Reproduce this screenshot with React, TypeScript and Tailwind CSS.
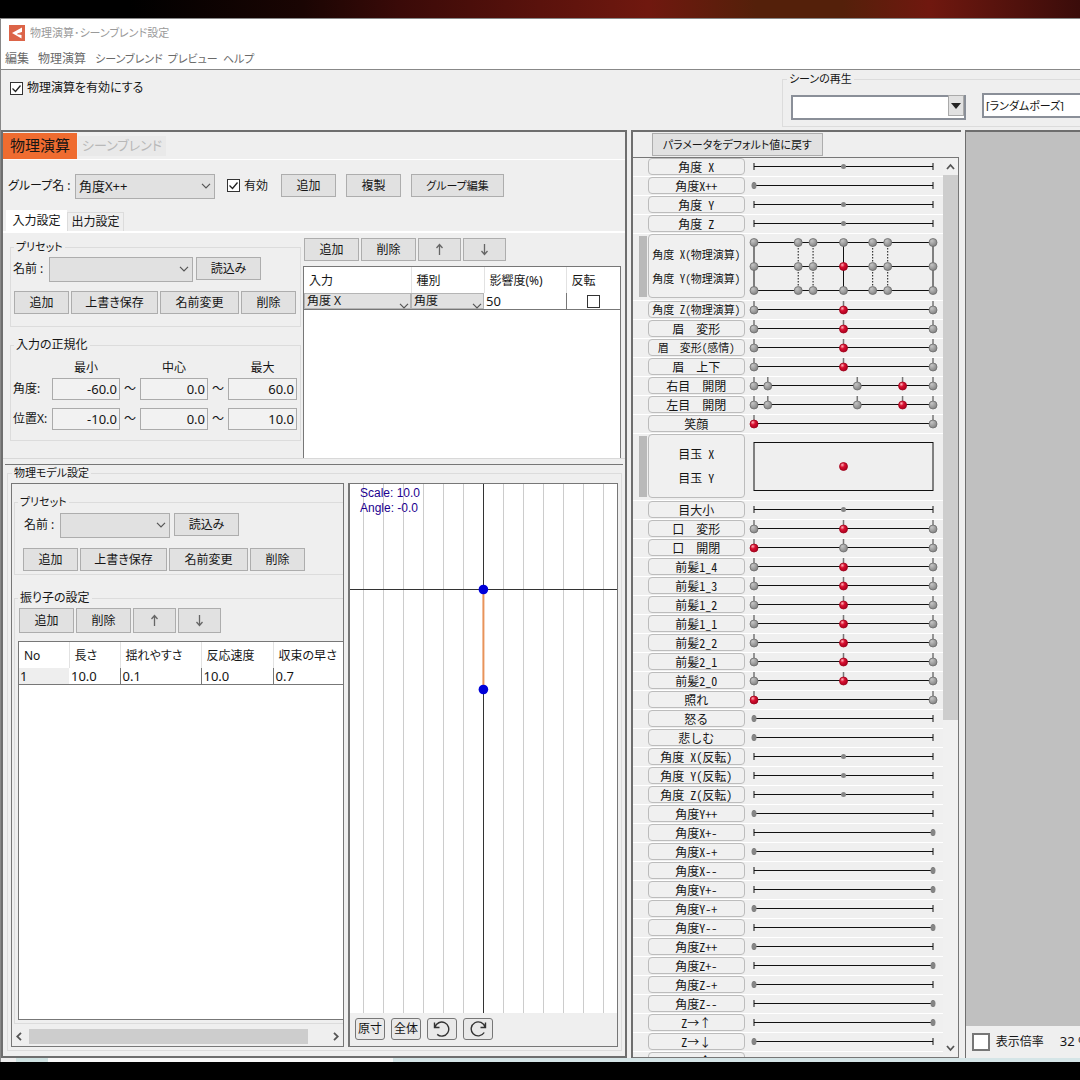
import React from 'react';

const KEY_FONT = "font-['Noto_Sans_CJK_JP',sans-serif]";

function Button({ w, h = 'h-[23px]', size = 'text-xs', children }: { w: string; h?: string; size?: string; children: React.ReactNode }) {
  return (
    <button
      type="button"
      className={`${w} ${h} ${size} flex shrink-0 items-center justify-center border border-[#adadad] bg-[#e1e1e1] leading-none whitespace-nowrap`}
    >
      {children}
    </button>
  );
}

function ArrowIcon({ down = false }: { down?: boolean }) {
  return (
    <svg width="9" height="13" viewBox="0 0 9 13" fill="none" stroke="#666" strokeWidth="1.3" aria-label={down ? '下へ' : '上へ'}>
      {down ? <path d="M4.5 1v10.5M1.5 8l3 3.5 3-3.5" /> : <path d="M4.5 12V1.5M1.5 5l3-3.5 3 3.5" />}
    </svg>
  );
}

function Chevron({ className = '' }: { className?: string }) {
  return (
    <svg width="10" height="6" viewBox="0 0 10 6" fill="none" stroke="#555" strokeWidth="1.2" className={`pointer-events-none absolute ${className}`}>
      <path d="M1 .8l4 4 4-4" />
    </svg>
  );
}

function Combo({ w, label, value = '' }: { w: string; label: string; value?: string }) {
  return (
    <span className={`relative block h-[25px] shrink-0 ${w}`}>
      <select aria-label={label} className="h-full w-full appearance-none border border-[#adadad] bg-[#e1e1e1] pl-[3px] text-[13px] leading-none">
        <option>{value}</option>
      </select>
      <Chevron className="top-[10px] right-1" />
    </span>
  );
}

function CellCombo({ label, value }: { label: string; value: string }) {
  return (
    <span className="relative block h-4">
      <select aria-label={label} className="block h-full w-full appearance-none border border-[#b5b5b5] bg-[#e1e1e1] pl-0.5 text-xs leading-none">
        <option>{value}</option>
      </select>
      <Chevron className="right-0.5 bottom-0" />
    </span>
  );
}

function CheckBox({ id, label }: { id: string; label: string }) {
  return (
    <span className="flex items-center gap-1">
      <span className="relative block h-[13px] w-[13px]">
        <input id={id} type="checkbox" defaultChecked className="peer block h-full w-full appearance-none border border-[#333] bg-white" />
        <svg viewBox="0 0 13 13" fill="none" stroke="#222" strokeWidth="1.3" className="pointer-events-none absolute inset-0 hidden peer-checked:block">
          <path d="M2.5 6.5l3 3 5-6" />
        </svg>
      </span>
      <label htmlFor={id} className="text-xs leading-4">{label}</label>
    </span>
  );
}

function Group({ title, size = 'text-xs', className = '', children }: { title: string; size?: string; className?: string; children: React.ReactNode }) {
  return (
    <fieldset className={`min-w-0 border border-[#dcdcdc] ${className}`}>
      <legend className={`ml-[3px] px-0.5 leading-4 ${size}`}>{title}</legend>
      {children}
    </fieldset>
  );
}

function Num({ label, value }: { label: string; value: string }) {
  return (
    <input
      aria-label={label}
      defaultValue={value}
      className="h-[22px] w-full min-w-0 border border-[#ababab] bg-[#f2f2f2] pr-0.5 text-right text-[13px] leading-none"
    />
  );
}

function RangeRow({ name, values }: { name: string; values: string[] }) {
  return (
    <div className="grid grid-cols-[39px_68px_20px_68px_20px_69px] items-center">
      <span className="text-xs whitespace-nowrap">{name}:</span>
      <Num label={`${name} 最小`} value={values[0]} />
      <span className="text-center text-xs leading-none">～</span>
      <Num label={`${name} 中心`} value={values[1]} />
      <span className="text-center text-xs leading-none">～</span>
      <Num label={`${name} 最大`} value={values[2]} />
    </div>
  );
}

type Slider = { name: string; size?: 'sm'; value: number; keys?: number[] };
type Pad = { names: [string, string]; size?: 'sm'; columns: number[] };
type Param = Slider | Pad;

const keyed = (name: string, value = 0.5, keys = [0, 0.5, 1], size?: 'sm'): Slider => ({ name, value, keys, size });
const plain = (name: string, value: number): Slider => ({ name, value });

const PARAMS: Param[] = [
  plain('角度 X', 0.5),
  plain('角度X++', 0),
  plain('角度 Y', 0.5),
  plain('角度 Z', 0.5),
  { names: ['角度 X(物理演算)', '角度 Y(物理演算)'], size: 'sm', columns: [0, 0.247, 0.33, 0.5, 0.663, 0.747, 1] },
  keyed('角度 Z(物理演算)', 0.5, [0, 0.5, 1], 'sm'),
  keyed('眉  変形'),
  keyed('眉  変形(感情)', 0.5, [0, 0.5, 1], 'sm'),
  keyed('眉  上下'),
  keyed('右目  開閉', 0.83, [0, 0.077, 0.577, 0.83, 1]),
  keyed('左目  開閉', 0.83, [0, 0.077, 0.577, 0.83, 1]),
  keyed('笑顔', 0, [0, 1]),
  { names: ['目玉 X', '目玉 Y'], columns: [] },
  plain('目大小', 0.5),
  keyed('口  変形'),
  keyed('口  開閉', 0),
  keyed('前髪1_4'),
  keyed('前髪1_3'),
  keyed('前髪1_2'),
  keyed('前髪1_1'),
  keyed('前髪2_2'),
  keyed('前髪2_1'),
  keyed('前髪2_0'),
  keyed('照れ', 0, [0, 1]),
  plain('怒る', 0),
  plain('悲しむ', 0),
  plain('角度 X(反転)', 0.5),
  plain('角度 Y(反転)', 0.5),
  plain('角度 Z(反転)', 0.5),
  plain('角度Y++', 0),
  plain('角度X+-', 1),
  plain('角度X-+', 0),
  plain('角度X--', 1),
  plain('角度Y+-', 1),
  plain('角度Y-+', 0),
  plain('角度Y--', 1),
  plain('角度Z++', 0),
  plain('角度Z+-', 1),
  plain('角度Z-+', 0),
  plain('角度Z--', 1),
  plain('Z→↑', 1),
  plain('Z→↓', 0),
  plain('Y→↑', 0),
];

const pct = (v: number) => `${v * 100}%`;

function Knob({ x, y, active }: { x: string; y: number; active?: boolean }) {
  return <circle cx={x} cy={y} r="4" fill={active ? 'url(#knobRed)' : 'url(#knobGrey)'} stroke={active ? '#a00018' : '#6c6c6c'} strokeWidth="0.8" />;
}

function Track({ p }: { p: Slider }) {
  return (
    <div className="relative mr-[10px] ml-[9px] h-[18px] min-w-0 flex-1">
      <svg width="100%" height="18" className="block overflow-visible">
        <line x1="0" x2="100%" y1="8.5" y2="8.5" stroke="#111" strokeWidth="1" />
        {p.keys ? (
          p.keys.map((k) => (
            <g key={k}>
              <line x1={pct(k)} x2={pct(k)} y1="0" y2="5" stroke="#777" strokeWidth="1.5" />
              <Knob x={pct(k)} y={9} active={k === p.value} />
            </g>
          ))
        ) : (
          <g>
            <line x1="0" x2="0" y1="5" y2="12" stroke="#111" />
            <line x1="100%" x2="100%" y1="5" y2="12" stroke="#111" />
            <ellipse cx={pct(p.value)} cy="8.5" rx="2.5" ry={p.value === 0.5 ? 2.5 : 3.5} fill="#858585" />
          </g>
        )}
      </svg>
      <input type="range" aria-label={p.name} min="0" max="1" step="0.01" defaultValue={p.value} className="absolute inset-0 w-full opacity-0" />
    </div>
  );
}

function PadTrack({ columns }: { columns: number[] }) {
  const rows = [8, 32, 56];
  return (
    <svg width="100%" height="66" className="mr-[10px] ml-[9px] block min-w-0 flex-1 overflow-visible">
      <rect x="0" y="8.5" width="100%" height="48" fill="none" stroke="#111" />
      {columns.length > 0 && <line x1="0" x2="100%" y1="32.5" y2="32.5" stroke="#111" />}
      {columns.slice(1, -1).map((c) => (
        <line key={c} x1={pct(c)} x2={pct(c)} y1="8" y2="56" stroke="#111" strokeDasharray={c === 0.5 ? undefined : '1.5 1.5'} />
      ))}
      {rows.map((y) => columns.map((c) => <Knob key={`${c}-${y}`} x={pct(c)} y={y + 0.5} active={c === 0.5 && y === 32} />))}
      {columns.length === 0 && <Knob x="50%" y={32.5} active />}
    </svg>
  );
}

function ParamRow({ p }: { p: Param }) {
  const text = `${p.size === 'sm' ? 'text-[11px]' : 'text-xs'} ${KEY_FONT} [font-feature-settings:'hwid']`;
  if ('names' in p) {
    return (
      <div className="flex h-[67px] shrink-0 border-b border-white pl-[6px]">
        <span className="mt-0.5 mr-px h-[61px] w-2 bg-[#b9b9b9]" />
        <button type="button" className={`${text} flex h-16 w-[97px] shrink-0 flex-col items-center justify-center gap-2 rounded border border-[#bcbcbc] bg-[#f0f0f0] leading-4 whitespace-pre`}>
          <span>{p.names[0]}</span>
          <span>{p.names[1]}</span>
        </button>
        <PadTrack columns={p.columns} />
      </div>
    );
  }
  return (
    <div className="flex h-[19px] shrink-0 border-b border-white pl-[15px]">
      <button type="button" className={`${text} flex h-[17px] w-[97px] shrink-0 items-center justify-center rounded border border-[#bcbcbc] bg-[#f0f0f0] leading-none whitespace-pre`}>
        {p.name}
      </button>
      <Track p={p} />
    </div>
  );
}

function PresetButtons() {
  return (
    <div className="flex gap-0.5">
      <Button w="w-[55px]">追加</Button>
      <Button w="w-[87px]">上書き保存</Button>
      <Button w="w-[79px]">名前変更</Button>
      <Button w="w-[55px]">削除</Button>
    </div>
  );
}

function ListButtons({ h }: { h?: string }) {
  return (
    <div className="flex gap-0.5">
      <Button w="w-[55px]" h={h}>追加</Button>
      <Button w="w-[55px]" h={h}>削除</Button>
      <Button w="w-[43px]" h={h}><ArrowIcon /></Button>
      <Button w="w-[43px]" h={h}><ArrowIcon down /></Button>
    </div>
  );
}

function InputSettings() {
  return (
    <div className="flex h-[226px] shrink-0 gap-0.5 border-b border-[#d8d8d8] pr-1 pl-[7px]">
      <div className="w-[291px] shrink-0 pt-1.5">
        <Group title="プリセット" size="text-[11px]" className="pb-3">
          <div className="mt-px flex items-center pl-0.5">
            <span className="w-9 shrink-0 text-xs">名前 :</span>
            <Combo w="w-[144px]" label="名前" />
            <span className="w-[3px]" />
            <Button w="w-[65px]">読込み</Button>
          </div>
          <div className="mt-[10px] pl-[3px]"><PresetButtons /></div>
        </Group>
        <Group title="入力の正規化" className="mt-[10px] pb-[10px]">
          <div className="pl-0.5">
            <div className="mt-[7px] mb-0.5 grid grid-cols-[39px_68px_20px_68px_20px_69px] text-center text-xs leading-4">
              <span className="col-start-2">最小</span>
              <span className="col-start-4">中心</span>
              <span className="col-start-6">最大</span>
            </div>
            <div className="flex flex-col gap-2">
              <RangeRow name="角度" values={['-60.0', '0.0', '60.0']} />
              <RangeRow name="位置X" values={['-10.0', '0.0', '10.0']} />
            </div>
          </div>
        </Group>
      </div>
      <div className="flex min-w-0 flex-1 flex-col pt-[5px]">
        <div className="pl-px"><ListButtons /></div>
        <div className="mt-[5px] flex-1 border-x border-t border-[#777] bg-white">
          <table className="w-full table-fixed border-collapse text-left text-xs">
            <colgroup>
              <col className="w-[107px]" />
              <col className="w-[73px]" />
              <col className="w-[82px]" />
              <col />
            </colgroup>
            <thead>
              <tr className="h-[26px]">
                {['入力', '種別', '影響度(%)', '反転'].map((t) => (
                  <th key={t} className="border-r border-[#e2e2e2] p-0 pt-0.5 pl-[5px] font-normal whitespace-nowrap last:border-r-0">{t}</th>
                ))}
              </tr>
            </thead>
            <tbody>
              <tr className="h-4 border-b border-[#777]">
                <td className="p-0"><CellCombo label="入力" value="角度 X" /></td>
                <td className="p-0"><CellCombo label="種別" value="角度" /></td>
                <td className="border-r border-[#777] p-0 pl-0.5 text-[13px] leading-4">50</td>
                <td className="p-0">
                  <input type="checkbox" aria-label="反転" className="mx-auto block h-[13px] w-[13px] appearance-none border border-[#333] bg-white" />
                </td>
              </tr>
            </tbody>
          </table>
        </div>
      </div>
    </div>
  );
}

function PendulumTable() {
  return (
    <table className="w-full table-fixed border-collapse text-left text-xs">
      <colgroup>
        <col className="w-[50px]" />
        <col className="w-[51px]" />
        <col className="w-[81px]" />
        <col className="w-[72px]" />
        <col />
      </colgroup>
      <thead>
        <tr className="h-[26px]">
          {['No', '長さ', '揺れやすさ', '反応速度', '収束の早さ'].map((t) => (
            <th key={t} className="border-r border-[#e2e2e2] p-0 pt-0.5 pl-[5px] font-normal whitespace-nowrap last:border-r-0">{t}</th>
          ))}
        </tr>
      </thead>
      <tbody>
        <tr className="h-4 border-b border-[#777] text-[13px] leading-4">
          <td className="bg-[#eee] p-0 pl-px">1</td>
          {['10.0', '0.1', '10.0', '0.7'].map((v, i) => (
            <td key={i} className="border-r border-[#777] p-0 pl-0.5 last:border-r-0">{v}</td>
          ))}
        </tr>
      </tbody>
    </table>
  );
}

function PendulumView() {
  const offsets = [-6, -5, -4, -3, -2, -1, 1, 2, 3, 4, 5, 6];
  return (
    <div className="relative min-h-0 flex-1 bg-white">
      <svg width="100%" height="100%" className="absolute inset-0">
        <svg x="50%" y="0" width="100%" height="100%" className="overflow-visible">
          <g shapeRendering="crispEdges">
            {offsets.map((o) => (
              <line key={o} x1={o * 20} x2={o * 20} y1="0" y2="100%" stroke="#ccc" />
            ))}
            <line x1="0" x2="0" y1="0" y2="100%" stroke="#333" />
            <line x1="-50%" x2="50%" y1="105.5" y2="105.5" stroke="#333" />
          </g>
          <line x1="0" x2="0" y1="105" y2="205" stroke="#e8935a" strokeWidth="2" />
          <circle cx="0" cy="105.5" r="4.8" fill="#0000d8" />
          <circle cx="0" cy="205.5" r="4.8" fill="#0000d8" />
        </svg>
      </svg>
      <div className="relative pt-0.5 pl-[10px] font-['Liberation_Sans',sans-serif] text-xs leading-[15px] text-[#1c0090]">
        <p>Scale: 10.0</p>
        <p>Angle: -0.0</p>
      </div>
    </div>
  );
}

const VIEW_BUTTON = 'flex h-[22px] w-[30px] items-center justify-center rounded-[3px] border border-[#777] bg-[#e9e9e9] text-xs leading-none whitespace-nowrap';

function ModelSettings() {
  return (
    <fieldset className="mr-[3px] mb-[5px] ml-1 flex min-h-0 min-w-0 flex-1 flex-col border border-[#dcdcdc] px-[3px] pb-[3px]">
      <legend className="ml-px px-0.5 text-[11px] leading-4">物理モデル設定</legend>
      <div className="mt-0.5 flex min-h-0 flex-1 gap-1">
        <div className="flex w-[333px] shrink-0 flex-col overflow-hidden border border-[#777] pl-0.5">
          <Group title="プリセット" size="text-[11px]" className="mt-[10px] shrink-0 border-r-0 pb-[3px]">
            <div className="mt-0.5 flex items-center pl-[9px]">
              <span className="w-9 shrink-0 text-xs">名前 :</span>
              <Combo w="w-[110px]" label="モデルの名前" />
              <span className="w-1" />
              <Button w="w-[65px]">読込み</Button>
            </div>
            <div className="mt-[11px] pl-2"><PresetButtons /></div>
          </Group>
          <Group title="振り子の設定" className="mt-[15px] flex min-h-0 flex-1 flex-col border-r-0 pb-[3px]">
            <div className="mt-0.5 pl-1"><ListButtons h="h-[25px]" /></div>
            <div className="mt-2 ml-[3px] min-h-0 flex-1 border-y border-l border-[#777] bg-white">
              <PendulumTable />
            </div>
          </Group>
          <div className="mt-1 flex h-4 shrink-0 items-center gap-[7px] pr-1 pl-0.5">
            <svg width="6" height="9" viewBox="0 0 6 9" fill="none" stroke="#555" strokeWidth="1.8"><path d="M5 .8L1.2 4.5 5 8.2" /></svg>
            <div className="h-[15px] flex-1"><div className="h-full w-[94%] bg-[#cdcdcd]" /></div>
            <svg width="6" height="9" viewBox="0 0 6 9" fill="none" stroke="#555" strokeWidth="1.8"><path d="M1 .8l3.8 3.7L1 8.2" /></svg>
          </div>
          <div className="h-0.5 shrink-0" />
        </div>
        <div className="flex min-w-0 flex-1 flex-col border border-l-2 border-[#777]">
          <PendulumView />
          <div className="flex h-[33px] shrink-0 gap-1.5 pt-[5px] pl-[5px]">
            <button type="button" className={VIEW_BUTTON}>原寸</button>
            <button type="button" className={VIEW_BUTTON}>全体</button>
            <button type="button" aria-label="元に戻す" className={VIEW_BUTTON}>
              <svg width="18" height="17" viewBox="0 0 18 17" fill="none" stroke="#333" strokeWidth="1.4">
                <path d="M1.5 1.5v5h5M2 6.2A7 7 0 1 1 4.2 13.4" />
              </svg>
            </button>
            <button type="button" aria-label="やり直す" className={VIEW_BUTTON}>
              <svg width="18" height="17" viewBox="0 0 18 17" fill="none" stroke="#333" strokeWidth="1.4">
                <path d="M16.5 1.5v5h-5M16 6.2A7 7 0 1 0 15.2 11.5" />
              </svg>
            </button>
          </div>
        </div>
      </div>
    </fieldset>
  );
}

function ParameterPanel() {
  return (
    <section className="flex w-[330px] shrink-0 flex-col overflow-hidden border-t-2 border-l-2 border-[#6e6e6e]">
      <div className="h-[25px] shrink-0 pt-px pl-[19px]">
        <Button w="w-[171px]" size="text-[11px]">パラメータをデフォルト値に戻す</Button>
      </div>
      <div className="mr-0.5 flex min-h-0 flex-1 border border-l-0 border-[#777]">
        <div className="flex min-w-0 flex-1 flex-col overflow-hidden">
          {PARAMS.map((p, i) => <ParamRow key={i} p={p} />)}
        </div>
        <div className="flex w-[15px] shrink-0 flex-col items-center bg-[#f0f0f0]">
          <svg width="9" height="17" viewBox="0 0 9 17" fill="none" stroke="#555" strokeWidth="1.8" className="shrink-0"><path d="M1 11l3.5-4L8 11" /></svg>
          <div className="min-h-0 w-full flex-1"><div className="h-[63%] w-full bg-[#cdcdcd]" /></div>
          <svg width="9" height="17" viewBox="0 0 9 17" fill="none" stroke="#555" strokeWidth="1.8" className="shrink-0"><path d="M1 6l3.5 4L8 6" /></svg>
        </div>
      </div>
    </section>
  );
}

function Toolbar() {
  return (
    <div className="flex h-[61px] shrink-0 items-start justify-between border-t border-[#888] pl-[9px]">
      <div className="pt-[10px]"><CheckBox id="physics" label="物理演算を有効にする" /></div>
      <fieldset className="w-[298px] overflow-hidden border border-r-0 border-[#dcdcdc] pb-2 pl-2">
        <legend className="ml-[-4px] px-0.5 text-[11px] leading-[18px]">シーンの再生</legend>
        <div className="mt-[5px] flex h-[25px] gap-4">
          <span className="relative block w-[175px] shrink-0">
            <select aria-label="シーン" className="h-full w-full appearance-none border-2 border-[#8a8f98] bg-white text-xs">
              <option></option>
            </select>
            <span className="pointer-events-none absolute inset-y-0.5 right-0.5 flex w-4 items-center justify-center border border-[#aaa] bg-[#e1e1e1]">
              <svg width="10" height="6" viewBox="0 0 10 6" fill="#222"><path d="M0 0h10L5 6z" /></svg>
            </span>
          </span>
          <select aria-label="ポーズ" className="min-w-0 flex-1 appearance-none border-2 border-r-0 border-[#8a8f98] bg-white pl-0.5 text-[11px] leading-none">
            <option>[ランダムポーズ]</option>
          </select>
        </div>
      </fieldset>
    </div>
  );
}

export default function App() {
  return (
    <div className="flex h-screen flex-col overflow-hidden bg-black font-['Noto_Sans','Noto_Sans_CJK_JP',sans-serif] text-[#151515] [font-feature-settings:'palt']">
      <svg width="0" height="0" className="absolute">
        <defs>
          <radialGradient id="knobGrey" cx="35%" cy="30%" r="75%">
            <stop offset="0" stopColor="#c4c4c4" />
            <stop offset="1" stopColor="#808080" />
          </radialGradient>
          <radialGradient id="knobRed" cx="35%" cy="30%" r="75%">
            <stop offset="0" stopColor="#ffb0b8" />
            <stop offset="0.4" stopColor="#d81030" />
            <stop offset="1" stopColor="#a80020" />
          </radialGradient>
        </defs>
      </svg>
      <div className="h-[18px] shrink-0 bg-[linear-gradient(90deg,#000_12%,#1a0503_28%,#3a0a08_37%,#5a120c_50%,#70180f_60%,#54200a_70%,#54200a_78%,#70180f_86%,#3a0c0a_100%)]" />
      <div className="flex min-h-0 flex-1 flex-col border-t border-l border-[#888] bg-[#efefef]">
        <header className="h-[50px] shrink-0 bg-white">
          <div className="flex items-center gap-[5px] pt-1.5 pl-2 text-[#9a9a9a]">
            <svg width="16" height="16" viewBox="0 0 16 16" className="shrink-0">
              <rect width="16" height="16" fill="#dc6448" />
              <path d="M13 2.5L3 8l9.5 5.5V10L8.5 9.2 13 7.5z" fill="#fff" />
              <path d="M8.3 9l5-1.6" stroke="#dc6448" strokeWidth="1" />
            </svg>
            <h1 className="text-[11px] leading-4">物理演算･シーンブレンド設定</h1>
          </div>
          <nav className="mt-[10px] flex pl-1 text-[11px] leading-4 text-[#6a6a6a]">
            <button type="button" className="mr-[9px] text-xs leading-4">編集</button>
            <button type="button" className="mr-[9px] text-xs leading-4">物理演算</button>
            <button type="button" className="mr-[5px]">シーンブレンド</button>
            <button type="button" className="mr-[5px]">プレビュー</button>
            <button type="button">ヘルプ</button>
          </nav>
        </header>
        <Toolbar />
        <main className="flex min-h-0 flex-1 gap-1">
          <section className="flex w-[58%] shrink-0 flex-col border-2 border-[#6e6e6e]">
            <div role="tablist" className="flex h-7 shrink-0 items-center border-b border-white">
              <button type="button" role="tab" aria-selected="true" className="h-[26px] w-[74px] bg-[#ef6c30] text-[15px] leading-none">物理演算</button>
              <button type="button" role="tab" aria-selected="false" className="ml-px h-5 bg-[#e9e9e9] px-1 text-[13px] leading-none text-[#b8b8b8]">シーンブレンド</button>
            </div>
            <div className="mt-[13px] flex shrink-0 items-center pl-[5px]">
              <span className="w-[67px] shrink-0 text-xs whitespace-nowrap">グループ名 :</span>
              <Combo w="w-[140px]" label="グループ名" value="角度X++" />
              <span className="w-3" />
              <CheckBox id="group-enabled" label="有効" />
              <div className="ml-[13px] flex gap-[10px]">
                <Button w="w-[55px]">追加</Button>
                <Button w="w-[55px]">複製</Button>
                <Button w="w-[93px]" size="text-[11px]">グループ編集</Button>
              </div>
            </div>
            <div role="tablist" className="mt-3 flex h-[23px] shrink-0 items-end border-b-2 border-white pl-[3px]">
              <button type="button" role="tab" aria-selected="true" className="h-full w-[61px] bg-white text-xs leading-none">入力設定</button>
              <button type="button" role="tab" aria-selected="false" className="h-[19px] w-[57px] border border-b-0 border-[#dcdcdc] text-xs leading-none">出力設定</button>
            </div>
            <InputSettings />
            <div className="mx-0.5 mt-[5px] h-px shrink-0 bg-[#777]" />
            <ModelSettings />
          </section>
          <ParameterPanel />
          <section className="flex min-w-0 flex-1 flex-col overflow-hidden border-t-2 border-l border-[#6e6e6e]">
            <div className="min-h-0 flex-1 bg-[#c0c0c0]" />
            <div className="flex h-8 shrink-0 items-center pl-1.5 whitespace-nowrap">
              <input id="zoom" type="checkbox" className="h-[18px] w-[18px] shrink-0 appearance-none border-2 border-[#777] bg-white" />
              <label htmlFor="zoom" className="ml-1.5 text-xs">表示倍率</label>
              <span className="ml-4 text-[13px]">32 %</span>
            </div>
          </section>
        </main>
        <div className="flex h-1 shrink-0">
          <div className="w-[15px] bg-[#eee]" />
          <div className="w-8 bg-[#cfe2e2]" />
          <div className="w-[32%] bg-[#f8f8f8]" />
          <div className="flex-1 bg-[#d5e5e7]" />
        </div>
      </div>
      <div className="h-[18px] shrink-0 bg-black" />
    </div>
  );
}
